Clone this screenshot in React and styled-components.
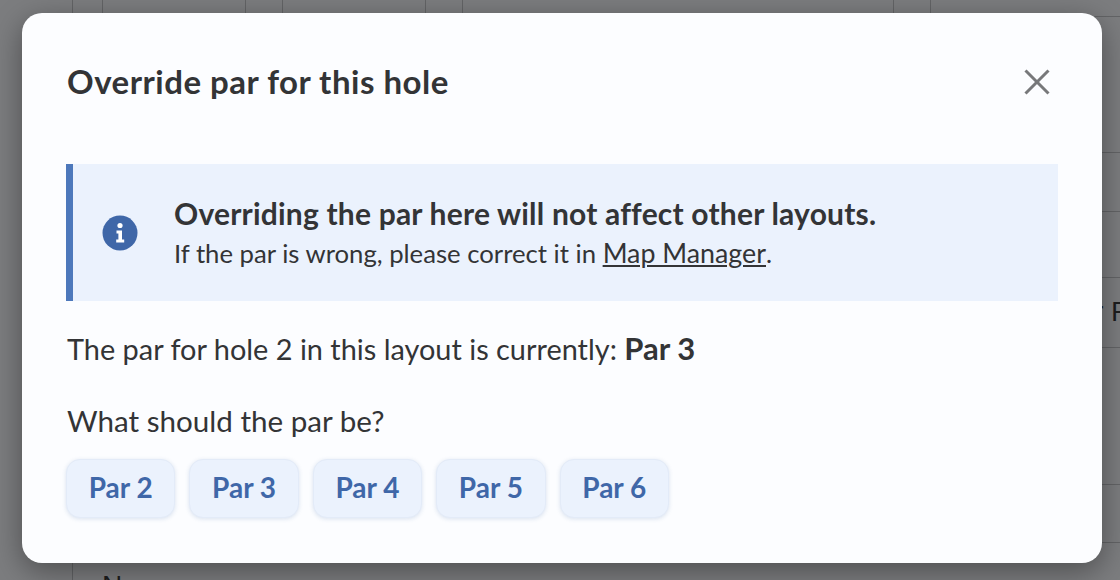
import React from 'react';
import styled, { createGlobalStyle } from 'styled-components';

const COLORS = {
  ink: '#333436',
  blue: '#3f67a8',
  stripe: '#4d78bb',
  tint: '#ebf2fd',
  line: '#636466',
};

const GlobalStyle = createGlobalStyle`
  html, body {
    margin: 0;
    padding: 0;
    height: 580px;
    overflow: hidden;
  }
  body {
    font-family: Lato, "Noto Sans", sans-serif;
    color: ${COLORS.ink};
  }
`;

const Page = styled.div`
  position: relative;
  width: 1120px;
  height: 580px;
  overflow: hidden;
  background: #7c7d7f;
`;

// the table sitting behind the dimmed overlay
const Table = styled.div`
  box-sizing: border-box;
  height: 100%;
  margin-left: 72px;
  border-left: 1px solid ${COLORS.line};
  font-family: "Liberation Sans", sans-serif;
  font-size: 28px;
  color: #1d1d1e;
`;

const HeaderRow = styled.div`
  display: grid;
  grid-template-columns: 30px 143px 37px 143px 37px 431px 37px 1fr;
  height: 16px;
  border-bottom: 1px solid ${COLORS.line};
`;

const HeaderCell = styled.div`
  border-right: 1px solid ${COLORS.line};
  &:last-child {
    border-right: none;
  }
`;

const Row = styled.div`
  box-sizing: border-box;
  height: ${props => props.h}px;
  padding-left: ${props => props.indent || 0}px;
  padding-top: ${props => props.top || 0}px;
  line-height: 32px;
  white-space: nowrap;
  border-bottom: ${props => props.last ? 'none' : `1px solid ${COLORS.line}`};
`;

const Backdrop = styled.div`
  position: absolute;
  inset: 0;
  display: flex;
  align-items: flex-start;
  padding: 13px 0 0 22px;
`;

const Modal = styled.div`
  box-sizing: border-box;
  width: 1080px;
  height: 550px;
  padding: 44px 44px 0;
  background: #fcfdff;
  border-radius: 20px;
  box-shadow: 0 8px 30px rgba(0, 0, 0, 0.38);
`;

const ModalHeader = styled.div`
  display: flex;
  align-items: center;
  justify-content: space-between;
  height: 50px;
  margin-bottom: 57px;
`;

const Title = styled.h2`
  margin: -2px 0 0;
  padding-left: 1px;
  font-size: 33px;
  font-weight: 700;
  letter-spacing: 0.5px;
  line-height: 50px;
`;

const CloseBtn = styled.button`
  display: flex;
  width: 28px;
  height: 28px;
  padding: 0;
  margin-right: 7px;
  border: none;
  background: none;
  color: #77787a;
  svg {
    display: block;
    width: 100%;
    height: 100%;
  }
`;

const Notice = styled.div`
  display: flex;
  align-items: center;
  box-sizing: border-box;
  height: 137px;
  padding-left: 29px;
  background: ${COLORS.tint};
  border-left: 7px solid ${COLORS.stripe};
`;

const NoticeIcon = styled.svg`
  flex: none;
  width: 36px;
  height: 36px;
  margin-right: 36px;
`;

const NoticeBody = styled.div`
  padding-top: 3px;
`;

const NoticeTitle = styled.div`
  margin-top: -2px;
  font-size: 30px;
  font-weight: 700;
  letter-spacing: 0.2px;
  line-height: 40px;
`;

const NoticeText = styled.div`
  font-size: 25.7px;
  line-height: 40px;
  a {
    color: inherit;
    font-size: 26.8px;
    text-decoration: underline;
  }
`;

const Line = styled.p`
  margin: ${props => props.top}px 0 0;
  padding-left: 1px;
  font-size: ${props => props.size}px;
  line-height: 36px;
  b {
    font-size: 31px;
  }
`;

const ParRow = styled.div`
  display: flex;
  gap: 14px;
  margin-top: 20px;
`;

const ParBtn = styled.button`
  width: 109.4px;
  height: 59px;
  padding: 0 0 3px;
  border: 1px solid #e3ebf8;
  border-radius: 14px;
  background: ${COLORS.tint};
  box-shadow: 0 1px 4px rgba(63, 103, 168, 0.18);
  color: ${COLORS.blue};
  font-family: inherit;
  font-size: 28px;
  font-weight: 700;
`;

const PARS = [2, 3, 4, 5, 6];
const HEADER_CELLS = Array.from({ length: 8 });

export default function App() {
  return (
    <Page>
      <GlobalStyle />
      <Table>
        <HeaderRow>
          {HEADER_CELLS.map((_, i) => <HeaderCell key={i} />)}
        </HeaderRow>
        <Row h={136} />
        <Row h={59} />
        <Row h={66} />
        <Row h={70} indent={1021} top={18}>r Par</Row>
        <Row h={137} />
        <Row h={58} />
        <Row h={38} indent={29} top={27} last>N</Row>
      </Table>
      <Backdrop>
        <Modal>
          <ModalHeader>
            <Title>Override par for this hole</Title>
            <CloseBtn type="button" aria-label="Close">
              <svg viewBox="0 0 28 28" fill="none" stroke="currentColor" strokeWidth="3">
                <line x1="2.5" y1="2.5" x2="25.5" y2="25.5" />
                <line x1="25.5" y1="2.5" x2="2.5" y2="25.5" />
              </svg>
            </CloseBtn>
          </ModalHeader>
          <Notice>
            <NoticeIcon viewBox="0 0 36 36">
              <circle cx="18" cy="18" r="17.5" fill={COLORS.blue} />
              <circle cx="18" cy="10.5" r="2.6" fill="#fff" />
              <path d="M14.5 15.5h5.5v9h2.2v3h-8v-3h2.2v-6h-1.9z" fill="#fff" />
            </NoticeIcon>
            <NoticeBody>
              <NoticeTitle>Overriding the par here will not affect other layouts.</NoticeTitle>
              <NoticeText>If the par is wrong, please correct it in <a href="#map">Map Manager</a>.</NoticeText>
            </NoticeBody>
          </Notice>
          <Line top={29} size={28.9}>The par for hole 2 in this layout is currently: <b>Par 3</b></Line>
          <Line top={36} size={29.6}>What should the par be?</Line>
          <ParRow>
            {PARS.map(p => <ParBtn key={p} type="button">Par {p}</ParBtn>)}
          </ParRow>
        </Modal>
      </Backdrop>
    </Page>
  );
}
